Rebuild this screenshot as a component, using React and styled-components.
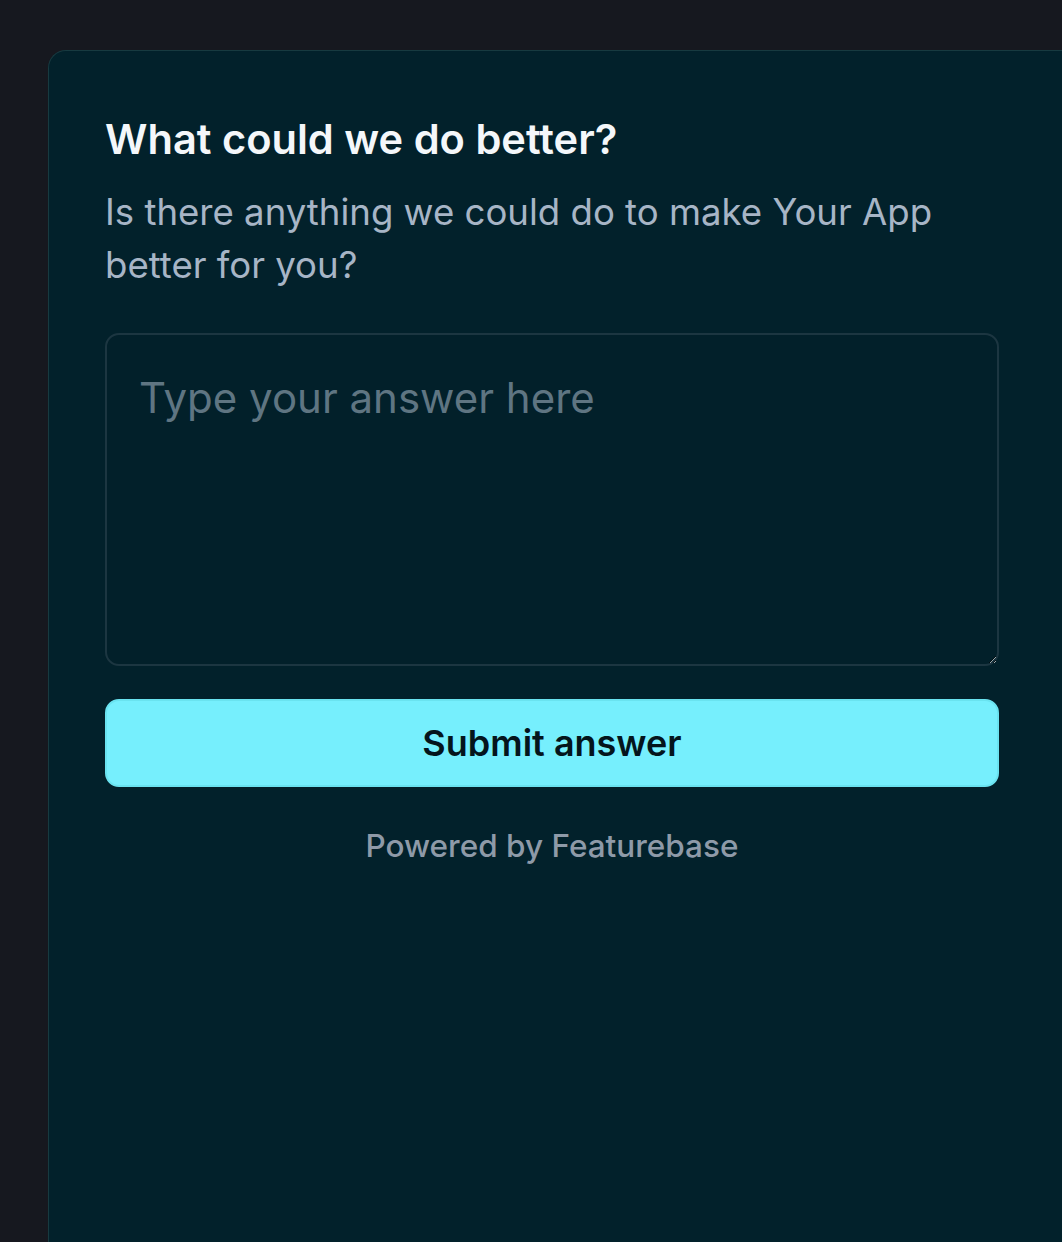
import styled, { createGlobalStyle } from "styled-components";

const GlobalStyle = createGlobalStyle`
  html, body {
    margin: 0;
    padding: 0;
    background: #16181f;
    overflow: hidden;
  }
  body {
    font-family: Inter, "Noto Sans", sans-serif;
    -webkit-font-smoothing: antialiased;
  }
`;

const Page = styled.div`
  width: 1062px;
  height: 1242px;
  box-sizing: border-box;
  padding: 50px 0 0 48px;
  overflow: hidden;
`;

const Card = styled.div`
  width: 1100px;
  min-height: 1300px;
  box-sizing: border-box;
  background: #02212b;
  border-top: 1.5px solid #173a40;
  border-left: 1.5px solid #173a40;
  border-top-left-radius: 18px;
  padding: 62px 0 0 56px;
`;

const Content = styled.div`
  width: 894px;
  display: flex;
  flex-direction: column;
`;

const Title = styled.h2`
  margin: 0;
  font-size: 41.6px;
  line-height: 52px;
  font-weight: 600;
  color: #f4f7fa;
`;

const Subtitle = styled.p`
  margin: 21px 0 0;
  font-size: 36.6px;
  line-height: 53px;
  font-weight: 400;
  color: #a7b5c6;
`;

const Answer = styled.textarea`
  margin-top: 41px;
  height: 333px;
  box-sizing: border-box;
  resize: vertical;
  padding: 38px 32px;
  background: #02202a;
  border: 2px solid #1c3641;
  border-radius: 14px;
  font-family: inherit;
  font-size: 42px;
  line-height: 1.2;
  color: #e8eef3;
  outline: none;

  &::placeholder {
    color: #5f7582;
  }
`;

const SubmitButton = styled.button`
  margin-top: 33px;
  height: 88px;
  border: 2px solid #6ae3f0;
  border-radius: 14px;
  background: #76effd;
  color: #04151c;
  font-family: inherit;
  font-size: 36px;
  font-weight: 600;
  cursor: pointer;
`;

const Powered = styled.a`
  margin-top: 39px;
  align-self: center;
  font-size: 31.5px;
  font-weight: 500;
  color: #8e9aa8;
  text-decoration: none;
`;

export default function App() {
  return (
    <>
      <GlobalStyle />
      <Page>
        <Card>
          <Content>
            <Title>What could we do better?</Title>
            <Subtitle>
              Is there anything we could do to make Your App better for you?
            </Subtitle>
            <Answer placeholder="Type your answer here" />
            <SubmitButton type="button">Submit answer</SubmitButton>
            <Powered href="#">Powered by Featurebase</Powered>
          </Content>
        </Card>
      </Page>
    </>
  );
}
